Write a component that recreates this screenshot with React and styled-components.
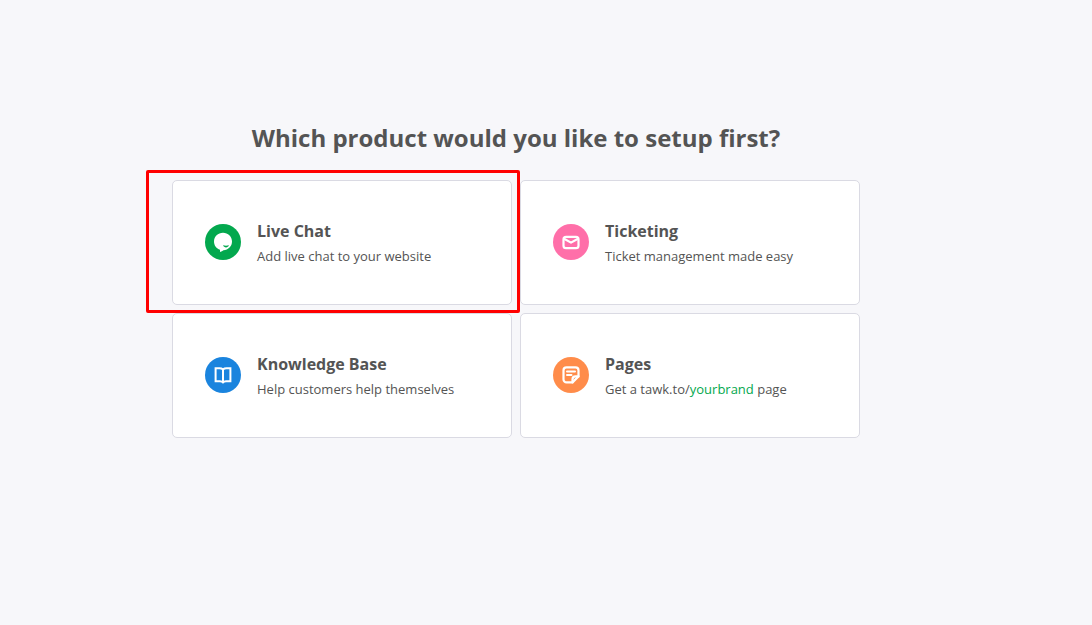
import React, { useState } from "react";
import styled, { createGlobalStyle } from "styled-components";

const GlobalStyle = createGlobalStyle`
  * {
    box-sizing: border-box;
  }
  body {
    margin: 0;
    background: #f7f7fa;
    color: #545454;
    font-family: "Open Sans", "Noto Sans", sans-serif;
  }
`;

const Page = styled.main`
  display: flex;
  flex-direction: column;
  align-items: center;
  min-height: 100vh;
  padding: 120px 84px 40px 24px;
`;

const Heading = styled.h1`
  margin: 0 0 24px;
  font-size: 24px;
  line-height: 36px;
  font-weight: 700;
  text-align: center;
`;

const ProductList = styled.ul`
  display: grid;
  grid-template-columns: repeat(2, 1fr);
  gap: 8px;
  width: 100%;
  max-width: 688px;
  margin: 0;
  padding: 0;
  list-style: none;
`;

const ProductItem = styled.li`
  position: relative;
  display: flex;
`;

// Red frame drawn around the chosen card
const Highlight = styled.div`
  position: absolute;
  z-index: 1;
  inset: -10px -8px -8px -26px;
  border: 3px solid #ff0000;
  border-radius: 2px;
  pointer-events: none;
`;

const Card = styled.button`
  display: flex;
  align-items: center;
  gap: 16px;
  width: 100%;
  padding: 36px 32px 37px;
  background: #fff;
  border: 1px solid #dadae3;
  border-radius: 5px;
  color: inherit;
  font-family: inherit;
  text-align: left;
  cursor: pointer;
`;

const IconCircle = styled.span`
  display: flex;
  flex-shrink: 0;
  width: 36px;
  height: 36px;
  border-radius: 50%;
  background: ${(props) => props.$color};
`;

const CardText = styled.span`
  display: flex;
  flex-direction: column;
  gap: 2px;
  padding-top: 2px;
`;

const Title = styled.span`
  font-size: 16px;
  line-height: 24px;
  font-weight: 700;
`;

const Description = styled.span`
  font-size: 13px;
  line-height: 22px;
`;

const Brand = styled.span`
  color: #03a84e;
`;

const ChatIcon = () => (
  <svg width="36" height="36" viewBox="0 0 36 36" aria-hidden="true">
    <path
      fill="#fff"
      d="M18 8.800c5 0 9 3.800 9 8.800 0 4.900-3.700 8.400-8.500 8.700-1 .6-2 1.200-3.500 1.600v-2.100C11.600 24.800 9 21.700 9 17.600c0-5 4-8.800 9-8.800z"
    />
    <path fill="#03a84e" d="M18 21.300c2 .5 4 .5 6 0-.6 1.400-1.700 2.100-3 2.100s-2.400-.7-3-2.100z" />
  </svg>
);

const MailIcon = () => (
  <svg width="36" height="36" viewBox="0 0 36 36" fill="none" stroke="#fff" strokeWidth="2.200" strokeLinecap="round" strokeLinejoin="round" aria-hidden="true">
    <rect x="10.500" y="12.800" width="15" height="11.400" rx="2.500" />
    <path d="M11.500 15L18 18.600l6.500-3.600" />
  </svg>
);

const BookIcon = () => (
  <svg width="36" height="36" viewBox="0 0 36 36" fill="none" stroke="#fff" strokeWidth="2" strokeLinejoin="miter" aria-hidden="true">
    <path d="M18 12.500c-1-.9-2-1.200-3.500-1.200h-3.900v12.900h4.400c1.300 0 2.200.3 3 1.200.8-.9 1.700-1.200 3-1.200h4.400V11.300h-3.900c-1.500 0-2.500.3-3.500 1.200z" />
    <path d="M18 12.500v12.500" />
  </svg>
);

const PagesIcon = () => (
  <svg width="36" height="36" viewBox="0 0 36 36" fill="none" stroke="#fff" strokeWidth="2.200" strokeLinecap="round" strokeLinejoin="round" aria-hidden="true">
    <path d="M19.500 25.400h-6a3 3 0 0 1-3-3v-9a3 3 0 0 1 3-3h9a3 3 0 0 1 3 3v6z" />
    <path d="M19.500 25.400v-3a3 3 0 0 1 3-3h3" />
    <path strokeWidth="2" d="M14 14.500h8M14 18h4.500" />
  </svg>
);

const products = [
  {
    id: "chat",
    title: "Live Chat",
    description: "Add live chat to your website",
    color: "#03a84e",
    icon: <ChatIcon />,
  },
  {
    id: "ticketing",
    title: "Ticketing",
    description: "Ticket management made easy",
    color: "#ff6fa9",
    icon: <MailIcon />,
  },
  {
    id: "kb",
    title: "Knowledge Base",
    description: "Help customers help themselves",
    color: "#1a84de",
    icon: <BookIcon />,
  },
  {
    id: "pages",
    title: "Pages",
    description: (
      <>
        Get a tawk.to/<Brand>yourbrand</Brand> page
      </>
    ),
    color: "#ff8c4a",
    icon: <PagesIcon />,
  },
];

const App = () => {
  const [selected, setSelected] = useState("chat");

  return (
    <>
      <GlobalStyle />
      <Page>
        <Heading>Which product would you like to setup first?</Heading>
        <ProductList>
          {products.map((product) => (
            <ProductItem key={product.id}>
              <Card type="button" onClick={() => setSelected(product.id)}>
                <IconCircle $color={product.color}>{product.icon}</IconCircle>
                <CardText>
                  <Title>{product.title}</Title>
                  <Description>{product.description}</Description>
                </CardText>
              </Card>
              {selected === product.id && <Highlight />}
            </ProductItem>
          ))}
        </ProductList>
      </Page>
    </>
  );
};

export default App;
